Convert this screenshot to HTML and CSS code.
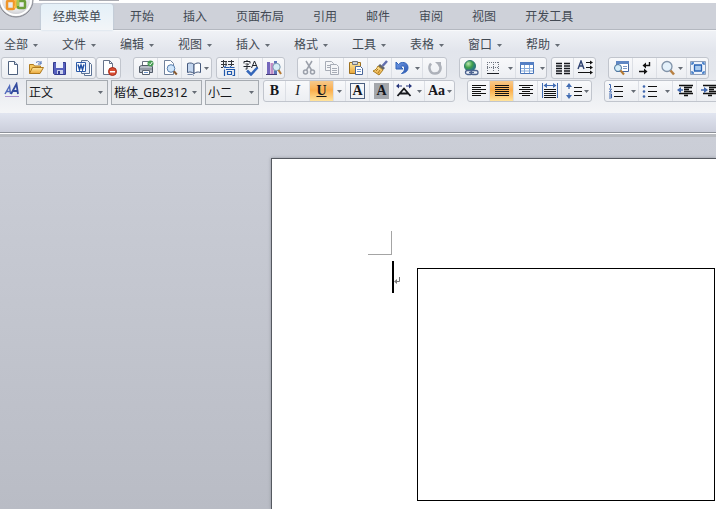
FILE: index.html
```html
<!DOCTYPE html>
<html lang="zh-CN">
<head>
<meta charset="utf-8">
<title>文档</title>
<link rel="stylesheet" href="styles.css">
</head>
<body>
<svg class="defs" aria-hidden="true">
  <defs>
    <linearGradient id="gold" x1="0" y1="0" x2="0" y2="1"><stop offset="0" stop-color="#ffe9a0"/><stop offset="1" stop-color="#e9a63a"/></linearGradient>
    <linearGradient id="blue" x1="0" y1="0" x2="1" y2="1"><stop offset="0" stop-color="#6f9be6"/><stop offset="1" stop-color="#2c55b0"/></linearGradient>
    <radialGradient id="orb" cx=".5" cy=".4" r=".6"><stop offset="0" stop-color="#fff"/><stop offset=".7" stop-color="#e3e4e7"/><stop offset="1" stop-color="#b8b9be"/></radialGradient>
    <radialGradient id="globe" cx=".35" cy=".3" r=".8"><stop offset="0" stop-color="#b9e6b0"/><stop offset=".45" stop-color="#3fa04b"/><stop offset="1" stop-color="#1c5fa8"/></radialGradient>
    <symbol id="caret" viewBox="0 0 5 3"><path d="M0 0h5L2.500 3z" fill="#666c75"/></symbol>
  </defs>
</svg>

<header class="top">
  <div class="titlebar"><span class="quick"></span></div>
  <button class="orb" aria-label="Office">
    <svg width="36" height="36" viewBox="0 0 36 36">
      <circle cx="18" cy="18" r="17" fill="url(#orb)" stroke="#85878f"/>
      <circle cx="18" cy="18" r="15" fill="none" stroke="#fff" stroke-width="2"/>
      <g fill="none" stroke-width="2.500">
        <rect x="9" y="19" width="7" height="8" rx="1" stroke="#f0962a"/>
        <path d="M13 16h5v9h-2" stroke="#f7bd45"/>
        <rect x="20" y="19" width="7" height="7" rx="1" stroke="#6d9f3a"/>
        <path d="M20 24v-8h6" stroke="#a8c653"/>
      </g>
    </svg>
  </button>
  <nav class="tabs">
    <button class="tab active">经典菜单</button><button class="tab">开始</button><button class="tab">插入</button><button class="tab">页面布局</button><button class="tab">引用</button><button class="tab">邮件</button><button class="tab">审阅</button><button class="tab">视图</button><button class="tab">开发工具</button>
  </nav>
</header>

<section class="ribbon">
  <nav class="menus">
    <button class="menu">全部<svg class="caret"><use href="#caret"/></svg></button>
    <button class="menu">文件<svg class="caret"><use href="#caret"/></svg></button>
    <button class="menu">编辑<svg class="caret"><use href="#caret"/></svg></button>
    <button class="menu">视图<svg class="caret"><use href="#caret"/></svg></button>
    <button class="menu">插入<svg class="caret"><use href="#caret"/></svg></button>
    <button class="menu">格式<svg class="caret"><use href="#caret"/></svg></button>
    <button class="menu">工具<svg class="caret"><use href="#caret"/></svg></button>
    <button class="menu">表格<svg class="caret"><use href="#caret"/></svg></button>
    <button class="menu">窗口<svg class="caret"><use href="#caret"/></svg></button>
    <button class="menu">帮助<svg class="caret"><use href="#caret"/></svg></button>
  </nav>

  <div class="bar">
    <div class="group">
      <button class="btn slim" aria-label="新建"><svg class="ico" viewBox="0 0 16 16"><path d="M3.500 1.500h6l3 3v10h-9z" fill="#fff" stroke="#4f617e"/><path d="M9.500 1.500v3h3" fill="#dbe5f4" stroke="#4f617e"/></svg></button>
      <button class="btn" aria-label="打开"><svg class="ico" viewBox="0 0 16 16"><path d="M1.500 13.500v-9h4l1 1.500h6v3" fill="#f4c65c" stroke="#b07a1f"/><path d="M1.500 13.500l3-6h11l-3.500 6z" fill="url(#gold)" stroke="#b07a1f"/><path d="M8 2.500c2-1.500 4-1 5 1m0-2.500v3h-3" fill="none" stroke="#4b70b5"/></svg></button>
      <button class="btn" aria-label="保存"><svg class="ico" viewBox="0 0 16 16"><path d="M1.500 2.500h12v12h-11l-1-1z" fill="#5660bd" stroke="#343c91"/><path d="M4 2h7v6H4z" fill="#eef2fc"/><path d="M5 10h6v4H5z" fill="#c9d0ec"/><path d="M6 11h2v3H6z" fill="#343c91"/></svg></button>
      <button class="btn" aria-label="另存为 Word"><svg class="ico" viewBox="0 0 16 16"><path d="M8.500 2.500h5l2 2v11h-7z" fill="#fff" stroke="#5c7295"/><path d="M5.500.500h6l2 2v11h-8z" fill="#e8effa" stroke="#5c7295"/><path d="M.500 2.500h9v9h-9z" fill="#fff" stroke="#2c5aa8"/><path d="M2 4.500l1.500 5L5 5l1.500 4.500L8 4.500" fill="none" stroke="#2151a5" stroke-width="1.500"/></svg></button>
    </div>
    <div class="group">
      <button class="btn" aria-label="关闭"><svg class="ico" viewBox="0 0 16 16"><path d="M2.500.500h6l3 3v11h-9z" fill="#fff" stroke="#66738a"/><path d="M8.500.500v3h3" fill="none" stroke="#66738a"/><circle cx="11.500" cy="11.500" r="4" fill="#d84d33" stroke="#a72c1a"/><path d="M9 11h5v1.500H9z" fill="#fff"/></svg></button>
    </div>
    <div class="group apart">
      <button class="btn" aria-label="快速打印"><svg class="ico" viewBox="0 0 16 16"><path d="M4.500 6V1.500h6L12 3v3" fill="#fff" stroke="#687181"/><path d="M1.500 6.500l2-1h9l2 1v6h-13z" fill="#b8bec8" stroke="#505966"/><path d="M2 9h12" stroke="#737b87"/><path d="M4.500 10.500h7v4h-7z" fill="#fff" stroke="#596370"/><path d="M6 12.500h4" stroke="#6d95cd"/><circle cx="12.500" cy="3.500" r="3" fill="#459b52"/><path d="M11 3.500l1.300 1.300L14.300 2" fill="none" stroke="#fff"/></svg></button>
      <button class="btn" aria-label="打印预览"><svg class="ico" viewBox="0 0 16 16"><path d="M2.500.500h6l3 3v11h-9z" fill="#fff" stroke="#71829c"/><circle cx="9" cy="8.500" r="3.800" fill="#cfe5fa" stroke="#557dad"/><path d="M11.800 11.300l3 3.200" stroke="#8a5a2f" stroke-width="2"/></svg></button>
      <button class="btn split" aria-label="阅读"><svg class="ico" viewBox="0 0 16 16"><path d="M1.500 3.500c3-1 5-.5 6.500 1v9c-2-1.500-4-2-6.500-1z" fill="#c5d7ef" stroke="#45597d"/><path d="M8 4.500c2-1.500 4-2 6.500-1v9c-2.500-1-4.500-.5-6.500 1z" fill="#fff" stroke="#45597d"/><path d="M1.500 14.500h5l1.500 1" fill="none" stroke="#7185a7"/></svg><svg class="caret"><use href="#caret"/></svg></button>
    </div>
    <div class="group near">
      <button class="btn slim" aria-label="繁简转换"><svg class="ico" viewBox="0 0 16 16"><g fill="none" stroke="#35383e"><path d="M1 1.500h6M3.500 0v7M1 4.500h6M6 2v4M8 1.500h6M8 4.500h6M11.500 0v6M1 7.500h2"/></g><g fill="none" stroke="#2259ac" stroke-width="1.200"><path d="M5.500 6l-1.500 2M5 7.500h4M11 6l-1.500 2M10.500 7.500h4M4.500 9.500V16M6 9.500h8.500v6h-2M7.500 11.500h4v3h-4z"/></g></svg></button>
      <button class="btn" aria-label="拼写检查"><svg class="ico" viewBox="0 0 16 16"><path d="M1 3.500v-2h6v2M2.500 4h3L4 5.500V9H2.500M.500 6.500h7M4 0v1M8.500 8l3-7 3 7M9.500 5.500h4" fill="none" stroke="#20242c"/><path d="M4 10.500l4 4 6.500-7" fill="none" stroke="#3466ba" stroke-width="2.500"/></svg></button>
      <button class="btn slim" aria-label="信息检索"><svg class="ico" viewBox="0 0 16 16"><path d="M1 2h3v12H1z" fill="#7568bd"/><path d="M4.500 3h3v11h-3z" fill="#c18bc5"/><path d="M8 1h3v13H8z" fill="#5b73b8"/><path d="M0 14.500h11" stroke="#453c77"/><circle cx="10.500" cy="7" r="3.700" fill="#d5edf6" stroke="#7899b0"/><path d="M12.500 10l2.500 4" stroke="#b57933" stroke-width="2"/></svg></button>
    </div>
    <div class="group apart">
      <button class="btn slim" aria-label="剪切"><svg class="ico" viewBox="0 0 16 16"><g fill="none" stroke="#9ba0aa" stroke-width="1.500"><path d="M5 1l5.500 9M11 1L5.500 10"/><circle cx="4.500" cy="12" r="2"/><circle cx="11.500" cy="12" r="2"/></g></svg></button>
      <button class="btn" aria-label="复制"><svg class="ico" viewBox="0 0 16 16"><g fill="#f5f6f8" stroke="#a7acb6"><path d="M1.500 1.500h6l2 2v7h-8z"/><path d="M6.500 4.500h6l2 2v8h-8z"/><path d="M8 8.500h5M8 10.500h5M8 12.500h5M3 5.500h3M3 7.500h3"/></g></svg></button>
      <button class="btn" aria-label="粘贴"><svg class="ico" viewBox="0 0 16 16"><path d="M1.500 2.500h11v11h-11z" fill="url(#gold)" stroke="#9e701e"/><path d="M4.500 1.500h5v3h-5z" fill="#d0d4db" stroke="#717780"/><path d="M7.500 6.500h5l2 2v6h-7z" fill="#fff" stroke="#496597"/><path d="M9 9.500h4M9 11.500h4" stroke="#7297cd"/></svg></button>
      <button class="btn" aria-label="格式刷"><svg class="ico" viewBox="0 0 16 16"><path d="M15 1l-4.500 5" stroke="#626fae" stroke-width="2.500"/><path d="M8 4l5 4-2 2-5-4z" fill="#64666d"/><path d="M6 6l5 4-4 5-6-4c3-1 4-3 5-5z" fill="url(#gold)" stroke="#aa7e22"/><path d="M4 11l2-2M6 13l2-3" stroke="#b17d23"/></svg></button>
      <button class="btn wide" aria-label="撤消"><svg class="ico" viewBox="0 0 16 16"><path d="M2 2v7h7L6.800 6.800C9 5 11 6 10.500 9c-.2 2-1.500 3.500-3 4.500 4-.5 6.500-2.500 6.500-6C14 2 7 1 4.500 4.500z" fill="url(#blue)" stroke="#2f62b8" stroke-width="1"/></svg><svg class="caret"><use href="#caret"/></svg></button>
      <button class="btn" aria-label="重复"><svg class="ico" viewBox="0 0 16 16"><path d="M4 3.500C1 7 2.500 13.500 8 13.500s7-6 4-9" fill="none" stroke="#adb1b9" stroke-width="2.500"/><path d="M8 2h6v6z" fill="#adb1b9"/></svg></button>
    </div>
    <div class="group apart">
      <button class="btn slim" aria-label="超链接"><svg class="ico" viewBox="0 0 16 16"><circle cx="7" cy="6" r="5.500" fill="url(#globe)" stroke="#2d7c70"/><g fill="#edf2fa" stroke="#4d6390" stroke-width="1.300"><rect x="2.500" y="10.500" width="7" height="4" rx="2"/><rect x="8" y="10.500" width="7" height="4" rx="2"/><path d="M6 12.500h5"/></g></svg></button>
      <button class="btn roomy" aria-label="边框"><svg class="ico" viewBox="0 0 16 16"><path d="M2 2.500h12M2 7.500h12M2.500 2v10M8.500 2v10M13.500 2v10" stroke="#6e7580" stroke-dasharray="1 1"/><path d="M2 13.500h12" stroke="#1c1f25"/></svg><svg class="caret"><use href="#caret"/></svg></button>
      <button class="btn wide" aria-label="插入表格"><svg class="ico" viewBox="0 0 16 16"><path d="M1.500 2.500h13v11h-13z" fill="#fff" stroke="#4773b7"/><path d="M1 2h14v3H1z" fill="#547fc4"/><path d="M2 8.500h12M2 11h12M5.500 5v8M10.500 5v8" stroke="#85aadb"/></svg><svg class="caret"><use href="#caret"/></svg></button>
    </div>
    <div class="group near">
      <button class="btn slim" aria-label="分栏"><svg class="ico" viewBox="0 0 16 16"><path d="M1 3.500h6M1 6h6M1 8.500h6M1 11h6M1 13.500h6M9 3.500h6M9 6h6M9 8.500h6M9 11h6M9 13.500h6" stroke="#15171c" stroke-width="1.300"/></svg></button>
      <button class="btn slim" aria-label="文字方向"><svg class="ico" viewBox="0 0 16 16"><path d="M1 9L4 1l3 8M2 6h4" fill="none" stroke="#2d4170" stroke-width="1.400"/><path d="M9 2.500h5M9 7.500h5M1 12.500h13" stroke="#111" stroke-width="1.200"/><path d="M13 .500l3 2-3 2zM13 5.500l3 2-3 2zM13 10.500l3 2-3 2z" fill="#111"/></svg></button>
    </div>
    <div class="group apart">
      <button class="btn" aria-label="查找"><svg class="ico" viewBox="0 0 16 16"><path d="M3.500 1.500h12v10h-12z" fill="#fff" stroke="#44669e"/><path d="M3 1h13v3H3z" fill="#5f87c4"/><path d="M10 6.500h4M10 8.500h4" stroke="#7a98c9"/><circle cx="5" cy="8" r="3.500" fill="#d5edf9" stroke="#46719a"/><path d="M7.500 10.500l3.500 4" stroke="#b57a33" stroke-width="2"/></svg></button>
      <button class="btn" aria-label="显示标记"><svg class="ico" viewBox="0 0 16 16"><path d="M12.500 2v3.500H8M2 11.500h6" fill="none" stroke="#111" stroke-width="1.400"/><path d="M9 2.500v6L5.500 5.500zM7 8.500v6l3.500-3z" fill="#111"/></svg></button>
      <button class="btn split" aria-label="显示比例"><svg class="ico" viewBox="0 0 16 16"><circle cx="7" cy="6.500" r="5" fill="#e4f1fb" stroke="#8193a9" stroke-width="1.300"/><path d="M10.500 10.500l3.500 4" stroke="#b78043" stroke-width="2.500"/></svg><svg class="caret"><use href="#caret"/></svg></button>
      <button class="btn slim" aria-label="全屏显示"><svg class="ico" viewBox="0 0 16 16"><path d="M.500 1.500h15v13H.500z" fill="#eef3fb" stroke="#8fa0bb"/><path d="M4.500 5h7v6h-7z" fill="#a9caee" stroke="#2963b4" stroke-width="1.300"/><path d="M2 5V3h2M12 3h2v2M2 11v2h2M12 13h2v-2" fill="none" stroke="#3473c4" stroke-width="1.300"/></svg></button>
    </div>
  </div>

  <div class="bar">
    <button class="btn plain" aria-label="样式"><svg class="ico" viewBox="0 0 16 16"><path d="M1 12L5.500 4l1 8M2.500 9.500H6" fill="none" stroke="#4f69bb" stroke-width="1.500"/><path d="M7 12l5.500-10 1.500 10M9 9h4.500" fill="none" stroke="#334b9e" stroke-width="1.800"/><path d="M1 14.500h14" stroke="#a78ccc"/></svg></button>
    <span class="pick style"><select aria-label="样式"><option>正文</option></select><svg class="caret"><use href="#caret"/></svg></span>
    <span class="pick font"><select aria-label="字体"><option>楷体_GB2312</option></select><svg class="caret"><use href="#caret"/></svg></span>
    <span class="pick size"><select aria-label="字号"><option>小二</option></select><svg class="caret"><use href="#caret"/></svg></span>
    <div class="group near">
      <button class="btn slim letter">B</button>
      <button class="btn letter italic">I</button>
      <button class="btn letter under on">U</button>
      <button class="btn arrow" aria-label="下划线样式"><svg class="caret"><use href="#caret"/></svg></button>
      <button class="btn letter"><span class="boxed">A</span></button>
      <button class="btn letter"><span class="shaded">A</span></button>
      <button class="btn wide" aria-label="字符缩放"><svg class="ico" viewBox="0 0 16 16"><path d="M1.500 13L8 5.500l6.500 7.500M4 10.500h8" fill="none" stroke="#15171c" stroke-width="1.800"/><path d="M1 3h5M10 3h5" stroke="#26357c"/><path d="M3 .500v5L0 3zM13 .500v5L16 3z" fill="#26357c"/></svg><svg class="caret"><use href="#caret"/></svg></button>
      <button class="btn split letter">Aa<svg class="caret"><use href="#caret"/></svg></button>
    </div>
    <div class="group apart">
      <button class="btn slim" aria-label="左对齐"><svg class="ico" viewBox="0 0 16 16"><path d="M1 2.500h14M1 4.500h9M1 6.500h14M1 8.500h9M1 10.500h14M1 12.500h9" stroke="#111"/></svg></button>
      <button class="btn on" aria-label="两端对齐"><svg class="ico" viewBox="0 0 16 16"><path d="M1 2.500h14M1 4.500h14M1 6.500h14M1 8.500h14M1 10.500h14M1 12.500h14" stroke="#111"/></svg></button>
      <button class="btn" aria-label="居中"><svg class="ico" viewBox="0 0 16 16"><path d="M1 2.500h14M4 4.500h8M1 6.500h14M4 8.500h8M1 10.500h14M4 12.500h8" stroke="#111"/></svg></button>
      <button class="btn" aria-label="分散对齐"><svg class="ico" viewBox="0 0 16 16"><path d="M.500 0v15M15.500 0v15M2 2.500h12" stroke="#416cb3"/><path d="M5 0v5L1.500 2.500zM11 0v5l3.500-2.500z" fill="#416cb3"/><path d="M2 6.500h12M2 8.500h12M2 10.500h12M2 12.500h12M2 14.500h12" stroke="#111"/></svg></button>
      <button class="btn split" aria-label="行距"><svg class="ico" viewBox="0 0 16 16"><path d="M3 3v3M3 10v3" stroke="#416cb3" stroke-width="1.300"/><path d="M3 0l3 4H0zM3 16l3-4H0z" fill="#416cb3"/><path d="M8 4.500h8M8 8.500h8M8 12.500h8" stroke="#111"/></svg><svg class="caret"><use href="#caret"/></svg></button>
    </div>
    <div class="group apart">
      <button class="btn roomy" aria-label="编号"><svg class="ico" viewBox="0 0 16 16"><path d="M1 1.500h1.500V5M1 6h2.500l-2 3h2.500M1 11h2.500v4H1M1 13h2" fill="none" stroke="#3f66ae"/><path d="M6 3.500h9M6 8.500h9M6 13.500h9" stroke="#111"/></svg><svg class="caret"><use href="#caret"/></svg></button>
      <button class="btn roomy" aria-label="项目符号"><svg class="ico" viewBox="0 0 16 16"><g fill="#3f66ae"><circle cx="2" cy="3.500" r="1.300"/><circle cx="2" cy="8.500" r="1.300"/><circle cx="2" cy="13.500" r="1.300"/></g><path d="M6 3.500h9M6 8.500h9M6 13.500h9" stroke="#111"/></svg><svg class="caret"><use href="#caret"/></svg></button>
      <button class="btn" aria-label="减少缩进"><svg class="ico" viewBox="0 0 16 16"><path d="M2 2.500h14M7 4.500h8M7 6.500h5M7 8.500h8M2 10.500h14M7 12.500h4" stroke="#111" stroke-width="1.400"/><path d="M3 7h3" stroke="#4169b0" stroke-width="1.500"/><path d="M4 4v6L0 7z" fill="#4169b0"/></svg></button>
      <button class="btn" aria-label="增加缩进"><svg class="ico" viewBox="0 0 16 16"><path d="M2 2.500h14M8 4.500h8M8 6.500h5M8 8.500h8M2 10.500h14M7 12.500h4" stroke="#111" stroke-width="1.400"/><path d="M0 7h4" stroke="#4169b0" stroke-width="1.500"/><path d="M3 4v6l4-3z" fill="#4169b0"/></svg></button>
    </div>
  </div>
</section>
<div class="band"></div>

<main class="canvas">
  <article class="page">
    <div class="corner"></div>
    <div class="line">
      <span class="cursor"></span>
      <svg class="mark" viewBox="0 0 6 8"><path d="M5.500 0v4.500H2" fill="none" stroke="#777"/><path d="M3 2v5L0 4.500z" fill="#777"/></svg>
      <div class="frame"></div>
    </div>
  </article>
</main>
</body>
</html>
```
FILE: styles.css
```css
* { box-sizing: border-box; }

body {
  margin: 0;
  height: 100vh;
  display: flex;
  flex-direction: column;
  overflow: hidden;
  background: #cbced7;
  color: #434a54;
  font: 12px/16px "Noto Sans", "Noto Sans CJK SC", sans-serif;
}

button, select { font: inherit; color: inherit; }

button {
  margin: 0;
  padding: 0;
  border: 0;
  background: none;
  white-space: nowrap;
}

.defs { position: absolute; width: 0; height: 0; }

.caret { flex: none; width: 5px; height: 3px; }

/* Title strip and tabs */
.top {
  position: relative;
  flex: none;
  background: #ced1d9;
}

.titlebar {
  height: 3px;
  padding-left: 39px;
  background: #fff;
}

.quick {
  display: block;
  width: 80px;
  height: 1px;
  background: #a9abb2;
}

.orb {
  position: absolute;
  left: -2px;
  top: -18px;
  height: 36px;
}

.tabs {
  display: flex;
  gap: 29px;
  height: 27px;
  padding-left: 41px;
  border-bottom: 1px solid #b4b8c0;
}

.tab { height: 27px; }

.tab.active {
  margin-right: -12px;
  margin-top: 1px;
  padding: 0 12px;
  height: 26px;
  border-radius: 3px 3px 0 0;
  background: linear-gradient(#e4f0f8, #f2f5f8);
  box-shadow: 0 0 2px #a9c3d6;
}

/* Ribbon */
.ribbon {
  flex: none;
  height: 83px;
  overflow: hidden;
  border-top: 1px solid #f8f9fb;
  background: linear-gradient(#f0f2f6, #e2e5ec 20px, #e3e6ec 40px, #f4f5f7);
}

.menus {
  display: flex;
  height: 26px;
  padding: 2px 0 0 4px;
}

.menu {
  display: flex;
  align-items: center;
  gap: 5px;
  width: 58px;
}

.bar {
  display: flex;
  height: 23px;
  padding-left: 1px;
}

.group {
  display: flex;
  flex: none;
  height: 22px;
  border: 1px solid #c1c5cd;
  border-radius: 3px;
  background: linear-gradient(#f8f9fb, #eceef2);
}

.apart { margin-left: 12px; }
.near { margin-left: 4px; }

.btn {
  display: flex;
  flex: none;
  align-items: center;
  justify-content: center;
  gap: 2px;
  width: 24px;
  height: 20px;
  border-right: 1px solid #dcdfe5;
}

.group .btn:last-child { border-right: 0; margin-right: -1px; }

.btn.slim { width: 22px; }
.btn.split { width: 30px; }
.btn.wide { width: 31px; gap: 5px; }
.btn.roomy { width: 34px; gap: 7px; }
.btn.arrow { width: 12px; }
.btn.plain { width: 22px; margin-right: 3px; border: 0; }

.btn.on { background: linear-gradient(#f6c98c, #fbae4c 45%, #ffe39c); }

.ico { flex: none; width: 16px; height: 16px; }

.letter {
  color: #15171c;
  font: bold 14px/16px "Liberation Serif", serif;
}

.italic { font-style: italic; font-weight: normal; }
.under { text-decoration: underline; }

.boxed, .shaded {
  width: 15px;
  height: 16px;
  line-height: 15px;
}

.boxed { border: 1px solid #4b5f80; line-height: 14px; }
.shaded { background: #a4a7ac; }

.pick {
  display: flex;
  flex: none;
  align-items: center;
  height: 25px;
  margin-right: 3px;
  padding-right: 4px;
  border: 1px solid #a6abb1;
  background: #e8eaec;
  color: #15171c;
}

.pick select {
  flex: 1;
  min-width: 0;
  padding: 0 0 0 2px;
  border: 0;
  background: none;
  appearance: none;
}

.style { width: 82px; }
.font { width: 91px; }
.size { width: 54px; margin-right: 0; }

/* Strip below the ribbon */
.band {
  flex: none;
  height: 24px;
  border-bottom: 3px solid #b8bbc0;
  background: linear-gradient(#e1e5f0, #cbcedb 19px, #8d9199 19px, #8d9199 20px, #fff 20px);
}

/* Document area */
.canvas {
  flex: 1;
  display: flex;
  min-height: 0;
  padding: 21px 0 0 271px;
  background: linear-gradient(#cbced7, #b9bcc5);
}

.page {
  flex: 1;
  padding: 72px 1px 0 96px;
  border: solid #555960;
  border-width: 1px 0 0 1px;
  background: #fff;
  box-shadow: 0 0 3px #8e929b;
}

.corner {
  width: 24px;
  height: 24px;
  border: solid #a4a4a4;
  border-width: 0 1px 1px 0;
}

.line {
  display: flex;
  align-items: flex-start;
  padding: 6px 0 0 24px;
}

.cursor {
  width: 2px;
  height: 32px;
  background: #000;
}

.mark {
  width: 6px;
  height: 8px;
  margin: 16px 17px 0 0;
}

.frame {
  flex: 1;
  height: 233px;
  margin-top: 7px;
  border: 1px solid #000;
}
```
